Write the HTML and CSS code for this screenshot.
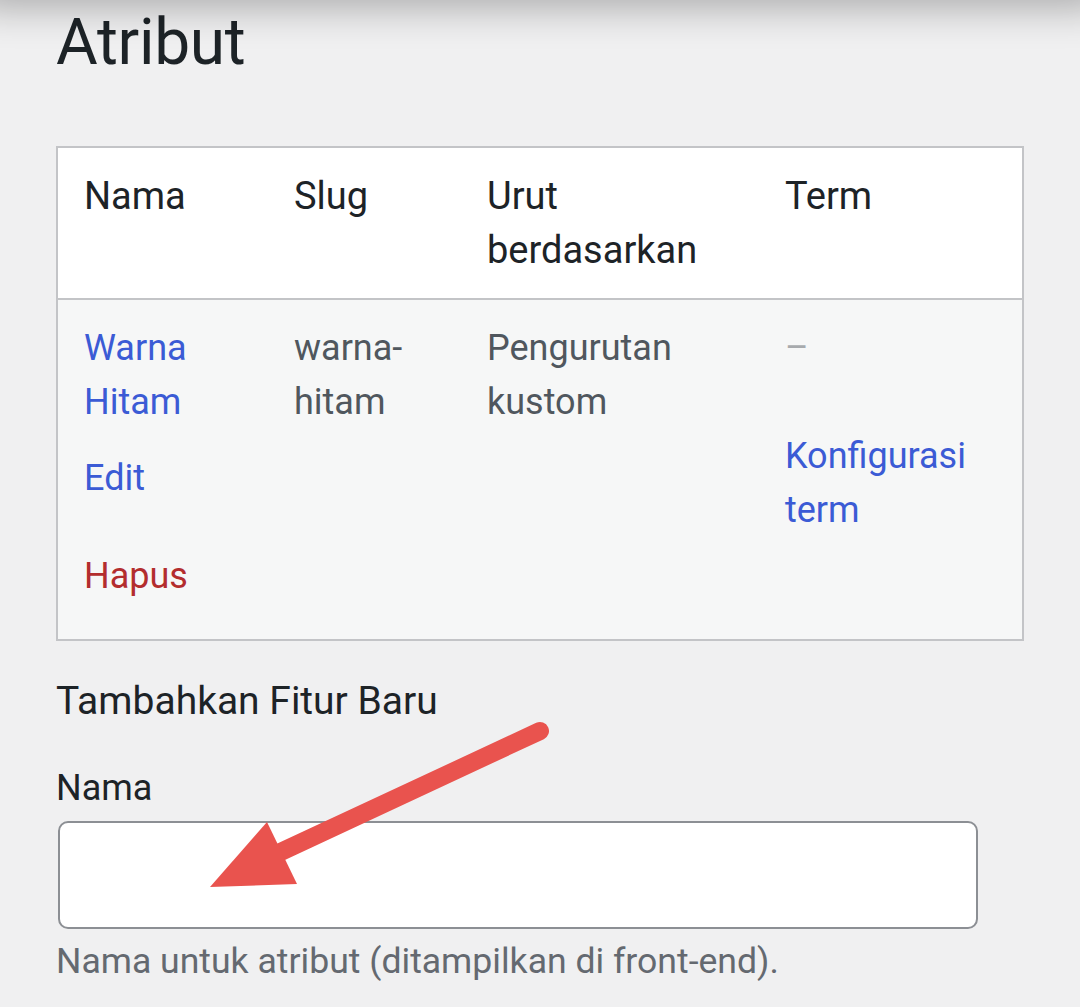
FILE: index.html
```html
<!DOCTYPE html>
<html lang="id">
<head>
    <meta charset="UTF-8">
    <meta name="viewport" content="width=device-width, initial-scale=1.0">
    <title>Atribut</title>
    <link rel="stylesheet" href="styles.css">
</head>
<body>
    <div class="wrap">
        <h1 class="page-title">Atribut</h1>

        <table class="attr-table">
            <colgroup>
                <col class="col-name">
                <col class="col-slug">
                <col class="col-order">
                <col class="col-terms">
            </colgroup>
            <thead>
                <tr>
                    <th>Nama</th>
                    <th>Slug</th>
                    <th>Urut berdasarkan</th>
                    <th>Term</th>
                </tr>
            </thead>
            <tbody>
                <tr>
                    <td>
                        <a href="#" class="link">Warna Hitam</a>
                        <div class="row-actions">
                            <a href="#" class="link">Edit</a>
                            <a href="#" class="link delete">Hapus</a>
                        </div>
                    </td>
                    <td class="muted">warna-hitam</td>
                    <td class="muted">Pengurutan kustom</td>
                    <td>
                        <span class="empty">&ndash;</span>
                        <a href="#" class="link configure">Konfigurasi term</a>
                    </td>
                </tr>
            </tbody>
        </table>

        <form class="add-form">
            <h2>Tambahkan Fitur Baru</h2>
            <div class="form-field">
                <label for="attrName">Nama</label>
                <input id="attrName" type="text">
                <p class="description">Nama untuk atribut (ditampilkan di front-end).</p>
            </div>
        </form>
    </div>

    <!-- annotation arrow drawn over the form -->
    <svg class="arrow" width="1080" height="1007" viewBox="0 0 1080 1007">
        <line x1="540" y1="731" x2="272" y2="856" stroke="#e9534e" stroke-width="18" stroke-linecap="round"/>
        <polygon points="267,822 297,884 210,887" fill="#e9534e"/>
    </svg>
</body>
</html>
```

FILE: styles.css
```css
*, *::before, *::after{
    box-sizing: border-box;
    margin: 0;
    padding: 0;
}

body{
    font-family: Roboto, "Noto Sans", sans-serif;
    background: #f0f0f1;
    color: #1d2327;
    min-height: 1007px;
    overflow: hidden;
}

/* shadow cast by the toolbar just above the view */
body::before{
    content: "";
    position: fixed;
    left: -20px;
    right: -20px;
    top: -30px;
    height: 30px;
    box-shadow: 0 0 40px 6px rgba(0, 0, 0, .32);
}

.wrap{
    padding: 0 56px;
}

.page-title{
    font-size: 64px;
    font-weight: 400;
    line-height: 77px;
    margin-top: 4px;
    letter-spacing: -0.3px;
}

.attr-table{
    margin-top: 65px;
    width: 968px;
    table-layout: fixed;
    border-collapse: collapse;
    border: 2px solid #c3c4c7;

    .col-name{ width: 211px; }
    .col-slug{ width: 193px; }
    .col-order{ width: 298px; }

    th, td{
        text-align: left;
        vertical-align: top;
        padding: 21px 24px 21px 26px;
        line-height: 54px;
    }

    th{
        font-size: 38px;
        font-weight: 400;
        background: #fff;
        border-bottom: 2px solid #c3c4c7;
    }

    td{
        font-size: 36px;
        background: #f6f7f7;
        padding-bottom: 14px;
    }
}

.link{
    color: #3b5bd5;
    text-decoration: none;
}

.muted{
    color: #50575e;
}

.row-actions{
    display: flex;
    flex-direction: column;
    gap: 44px;
    padding-top: 22px;
    padding-bottom: 22px;

    .delete{
        color: #b32d2e;
    }
}

.empty{
    display: block;
    color: #a7aaad;
}

.configure{
    display: block;
    margin-top: 54px;
}

.add-form{
    h2{
        font-size: 39px;
        font-weight: 400;
        line-height: 54px;
        margin-top: 33px;
    }
}

.form-field{
    margin-top: 33px;

    label{
        display: block;
        font-size: 36px;
        line-height: 54px;
    }

    input{
        display: block;
        margin: 6px 0 0 2px;
        width: 920px;
        height: 108px;
        border: 2px solid #8c8f94;
        border-radius: 10px;
        background: #fff;
        font: inherit;
        font-size: 36px;
        padding: 0 20px;
    }

    .description{
        margin-top: 5px;
        font-size: 35.6px;
        line-height: 54px;
        color: #646970;
    }
}

.arrow{
    position: absolute;
    left: 0;
    top: 0;
    pointer-events: none;
}
```
